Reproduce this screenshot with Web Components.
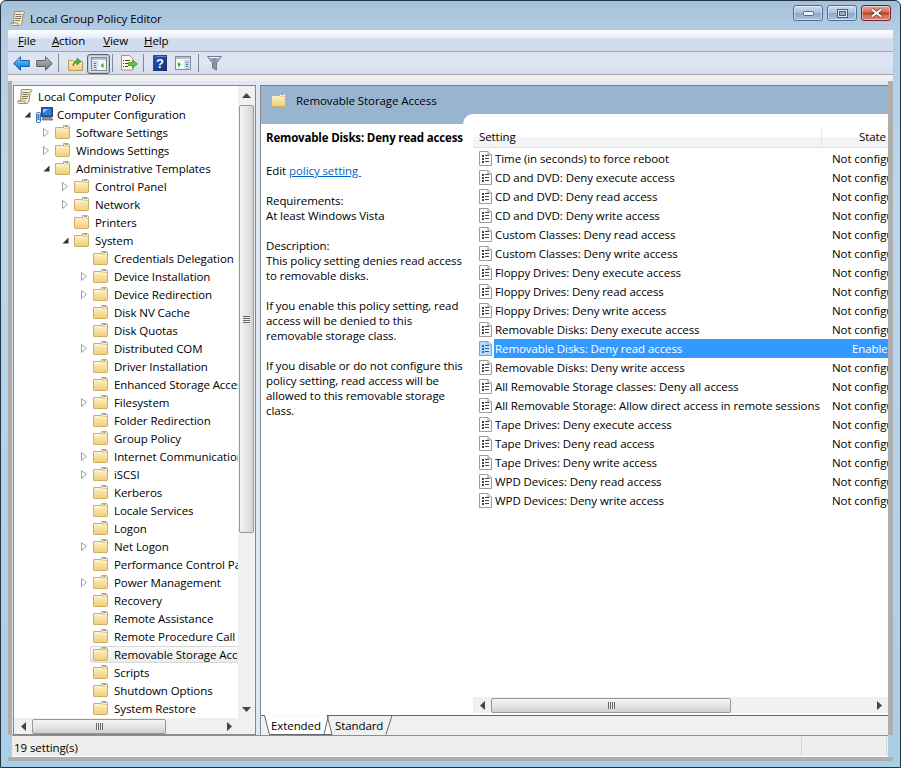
<!DOCTYPE html>
<html lang="en"><head><meta charset="utf-8"><title>Local Group Policy Editor</title>
<style>
html,body{margin:0;padding:0;background:#fff}
body{width:901px;height:770px;overflow:hidden;font:11.5px/15px "Open Sans","Noto Sans",sans-serif;letter-spacing:-.08px;color:#000}
</style></head><body>
<app-window>
  <title-bar slot="title">Local Group Policy Editor</title-bar>
  <menu-bar slot="menu"><span><u>F</u>ile</span><span><u>A</u>ction</span><span><u>V</u>iew</span><span><u>H</u>elp</span></menu-bar>
  <tool-bar slot="tools">
    <ui-icon name="back" style="margin-left:5px"></ui-icon>
    <ui-icon name="forward" style="margin-left:6px"></ui-icon>
    <tool-sep style="margin-left:5px"></tool-sep>
    <ui-icon name="up" style="margin-left:9px"></ui-icon>
    <tool-toggle style="margin-left:4px"><ui-icon name="pane"></ui-icon></tool-toggle>
    <tool-sep style="margin-left:2px"></tool-sep>
    <ui-icon name="export" style="margin-left:8px"></ui-icon>
    <tool-sep style="margin-left:5px"></tool-sep>
    <ui-icon name="help" style="margin-left:9px"></ui-icon>
    <ui-icon name="view" style="margin-left:8px"></ui-icon>
    <tool-sep style="margin-left:7px"></tool-sep>
    <ui-icon name="filter" style="margin-left:8px"></ui-icon>
  </tool-bar>
  <tree-pane slot="tree">
    <tree-row level="0" icon="scroll">Local Computer Policy</tree-row>
    <tree-row level="1" state="open" icon="computer">Computer Configuration</tree-row>
    <tree-row level="2" state="closed">Software Settings</tree-row>
    <tree-row level="2" state="closed">Windows Settings</tree-row>
    <tree-row level="2" state="open">Administrative Templates</tree-row>
    <tree-row level="3" state="closed">Control Panel</tree-row>
    <tree-row level="3" state="closed">Network</tree-row>
    <tree-row level="3">Printers</tree-row>
    <tree-row level="3" state="open">System</tree-row>
    <tree-row level="4">Credentials Delegation</tree-row>
    <tree-row level="4" state="closed">Device Installation</tree-row>
    <tree-row level="4" state="closed">Device Redirection</tree-row>
    <tree-row level="4">Disk NV Cache</tree-row>
    <tree-row level="4">Disk Quotas</tree-row>
    <tree-row level="4" state="closed">Distributed COM</tree-row>
    <tree-row level="4">Driver Installation</tree-row>
    <tree-row level="4">Enhanced Storage Access</tree-row>
    <tree-row level="4" state="closed">Filesystem</tree-row>
    <tree-row level="4">Folder Redirection</tree-row>
    <tree-row level="4">Group Policy</tree-row>
    <tree-row level="4" state="closed">Internet Communication Management</tree-row>
    <tree-row level="4" state="closed">iSCSI</tree-row>
    <tree-row level="4">Kerberos</tree-row>
    <tree-row level="4">Locale Services</tree-row>
    <tree-row level="4">Logon</tree-row>
    <tree-row level="4" state="closed">Net Logon</tree-row>
    <tree-row level="4">Performance Control Panel</tree-row>
    <tree-row level="4" state="closed">Power Management</tree-row>
    <tree-row level="4">Recovery</tree-row>
    <tree-row level="4">Remote Assistance</tree-row>
    <tree-row level="4">Remote Procedure Call</tree-row>
    <tree-row level="4" selected>Removable Storage Access</tree-row>
    <tree-row level="4">Scripts</tree-row>
    <tree-row level="4">Shutdown Options</tree-row>
    <tree-row level="4">System Restore</tree-row>
  </tree-pane>
  <details-pane slot="details">
    <span slot="heading">Removable Storage Access</span>
    <policy-info slot="info"></policy-info>
    <policy-list slot="list">
      <policy-row>Time (in seconds) to force reboot</policy-row>
      <policy-row>CD and DVD: Deny execute access</policy-row>
      <policy-row>CD and DVD: Deny read access</policy-row>
      <policy-row>CD and DVD: Deny write access</policy-row>
      <policy-row>Custom Classes: Deny read access</policy-row>
      <policy-row>Custom Classes: Deny write access</policy-row>
      <policy-row>Floppy Drives: Deny execute access</policy-row>
      <policy-row>Floppy Drives: Deny read access</policy-row>
      <policy-row>Floppy Drives: Deny write access</policy-row>
      <policy-row>Removable Disks: Deny execute access</policy-row>
      <policy-row selected>Removable Disks: Deny read access</policy-row>
      <policy-row>Removable Disks: Deny write access</policy-row>
      <policy-row>All Removable Storage classes: Deny all access</policy-row>
      <policy-row>All Removable Storage: Allow direct access in remote sessions</policy-row>
      <policy-row>Tape Drives: Deny execute access</policy-row>
      <policy-row>Tape Drives: Deny read access</policy-row>
      <policy-row>Tape Drives: Deny write access</policy-row>
      <policy-row>WPD Devices: Deny read access</policy-row>
      <policy-row>WPD Devices: Deny write access</policy-row>
    </policy-list>
    <tab-strip slot="tabs"></tab-strip>
  </details-pane>
  <status-bar slot="status">19 setting(s)</status-bar>
</app-window>

<script>
const folderDefs = `<linearGradient id="fg" x1="0" y1="0" x2="0" y2="1"><stop offset="0" stop-color="#fdf1c4"/><stop offset="1" stop-color="#f1cd78"/></linearGradient>`;
const docLines = (c) => `<g fill="${c}"><rect x="3" y="4" width="2" height="2"/><rect x="6" y="4" width="4" height="1"/><rect x="3" y="7" width="2" height="2"/><rect x="6" y="7" width="4" height="1"/><rect x="3" y="10" width="2" height="2"/><rect x="6" y="10" width="4" height="1"/></g>`;
const ICONS = {
  folder:[15,14,`<defs>${folderDefs}</defs><path d="M8.5 .5h5l1 1v2h-6z" fill="#fbeebb" stroke="#c9a861"/><rect x="10" y="1" width="3" height="1" fill="#6fa6d6"/><path d="M.5 2.5h7l1 1h6v9.5l-.5.5H1l-.5-.5z" fill="url(#fg)" stroke="#cfae66"/><path d="M1.5 4h12" stroke="#fff6d6"/>`],
  scroll:[16,17,`<path d="M4.5 1.5h9c1.2 0 1.8 1 1.2 2l-1.7 .5-1 9c-.2 1.5-1 2.5-2.5 2.5H2.5C1 15.500 .5 14 1 13h2.500z" fill="#f6edc9" stroke="#9d8e62"/><path d="M5.500 4.500h6M5.500 6.500h6M5 8.500h6M5 10.500h5" stroke="#7d7563"/><path d="M1 13h7c.5 0 .5 1.500 0 2.500" fill="none" stroke="#9d8e62"/>`],
  computer:[17,17,`<rect x="5.500" y="1.500" width="11" height="9" fill="#1e58b8" stroke="#374a6a"/><rect x="7" y="3" width="8" height="6" fill="#2f7fe0"/><path d="M7 3h5l-5 4z" fill="#9fd0f6"/><path d="M7 11h8l2 3H6z" fill="#8f9bb0" stroke="#4b5872" stroke-width=".7"/><rect x=".5" y="6.500" width="4" height="10" rx="1" fill="#dfe8f2" stroke="#3d6fa8"/><rect x="1.500" y="8" width="2" height="6" fill="#3a82cc"/>`],
  doc:[13,15,`<path d="M.5 .5h8.500l3.500 3.500v10.500H.5z" fill="#fff" stroke="#9c9c9c"/><path d="M9 .5v3.500h3.500" fill="#e8e8e8" stroke="#9c9c9c"/>${docLines('#444')}`],
  docsel:[13,15,`<path d="M.5 .5h8.500l3.500 3.500v10.500H.5z" fill="#b9dbff" stroke="#6aa6e0"/><path d="M9 .5v3.500h3.500" fill="#d6e9ff" stroke="#6aa6e0"/>${docLines('#2468b0')}`],
  back:[17,15,`<defs><linearGradient id="bk" x1="0" y1="0" x2="0" y2="1"><stop offset="0" stop-color="#8fd5fb"/><stop offset=".55" stop-color="#2c9bea"/><stop offset="1" stop-color="#1569c6"/></linearGradient></defs><path d="M.7 7.500 7.500 .8v3.700h8.800v6H7.500v3.700z" fill="url(#bk)" stroke="#1a5fa8"/>`],
  forward:[17,15,`<defs><linearGradient id="fw" x1="0" y1="0" x2="0" y2="1"><stop offset="0" stop-color="#c4c4c4"/><stop offset="1" stop-color="#6f6f6f"/></linearGradient></defs><path d="M16.300 7.500 9.500 .8v3.700H.7v6h8.800v3.700z" fill="url(#fw)" stroke="#5f5f5f"/>`],
  up:[15,16,`<defs>${folderDefs}</defs><path d="M.5 5.500h5l1 1h8v9h-14z" fill="url(#fg)" stroke="#b99b56"/><path d="M5 11c0-3 1.500-5 4-5.500V3l4 3.500-4 3.500V7.500c-1.500.3-3 1.500-4 3.500z" fill="#4fb43c" stroke="#2f8124" stroke-width=".7"/>`],
  pane:[16,14,`<rect x=".5" y=".5" width="15" height="13" fill="#f4f6f8" stroke="#7d8794"/><rect x="1" y="1" width="14" height="2" fill="#b7c2cf"/><rect x="2" y="4.500" width="4" height="8" fill="#dbe9f5" stroke="#7aa4c8" stroke-width=".5"/><g fill="#2e7fbd"><rect x="3" y="6" width="2" height="1"/><rect x="3" y="8" width="2" height="1"/><rect x="3" y="10" width="2" height="1"/></g><path d="M12.500 6v5l-3-2.500z" fill="#2ca52c"/>`],
  export:[17,16,`<path d="M.5 .5h8l3.500 3.500v11H.5z" fill="#fdf8e6" stroke="#a39a80"/><g fill="#444"><rect x="2" y="5" width="1" height="1"/><rect x="4" y="5" width="5" height="1"/><rect x="2" y="8" width="1" height="1"/><rect x="4" y="8" width="3" height="1"/><rect x="2" y="11" width="1" height="1"/><rect x="4" y="11" width="3" height="1"/></g><path d="M7.500 7.500h4V5l5 4-5 4v-2.500h-4z" fill="#6dc24a" stroke="#3e8f2a" stroke-width=".8"/>`],
  help:[14,16,`<defs><linearGradient id="hp" x1="0" y1="0" x2="1" y2="1"><stop offset="0" stop-color="#2a55b8"/><stop offset="1" stop-color="#132c74"/></linearGradient></defs><rect width="14" height="16" fill="url(#hp)"/><path d="M3 1h10v1H3z" fill="#5d86d8"/><text x="7" y="13" text-anchor="middle" font-family="Liberation Sans" font-size="13" font-weight="700" fill="#fff">?</text>`],
  view:[16,14,`<rect x=".5" y=".5" width="15" height="13" fill="#f6f6f6" stroke="#858b92"/><rect x="1" y="1" width="14" height="2" fill="#b8bfc6"/><path d="M3 6v5l3-2.500z" fill="#2ca52c"/><rect x="10" y="4.500" width="4" height="8" fill="#dbe9f5" stroke="#7aa4c8" stroke-width=".5"/><g fill="#2e7fbd"><rect x="11" y="6" width="2" height="1"/><rect x="11" y="8" width="2" height="1"/><rect x="11" y="10" width="2" height="1"/></g>`],
  filter:[15,16,`<defs><linearGradient id="fl" x1="0" y1="0" x2="1" y2="0"><stop offset="0" stop-color="#c9d3dc"/><stop offset=".5" stop-color="#7e8d9c"/><stop offset="1" stop-color="#c5cfd8"/></linearGradient></defs><path d="M.5 1.500h14L9.500 8v7l-4-2V8z" fill="url(#fl)" stroke="#6d7d8c"/><path d="M2.500 2.500h10" stroke="#f2f6fa"/>`],
  open:[7,7,`<path d="M6.500 .5v6H.5z" fill="#333"/>`],
  closed:[6,9,`<path d="M.5 .5 5.500 4.500 .5 8.500z" fill="#fff" stroke="#a0a0a0"/>`]
};
customElements.define('ui-icon',class extends HTMLElement{
  static get observedAttributes(){return ['name']}
  attributeChangedCallback(){this.render()}
  connectedCallback(){this.render()}
  render(){
    const def=ICONS[this.getAttribute('name')]; if(!def) return;
    const [w,h,body]=def;
    const r=this.shadowRoot||this.attachShadow({mode:'open'});
    r.innerHTML=`<style>:host{display:inline-flex;flex:none;width:${w}px;height:${h}px}svg{display:block}</style><svg width="${w}" height="${h}" viewBox="0 0 ${w} ${h}">${body}</svg>`;
  }
});
const el=(name,html,onConnect)=>customElements.define(name,class extends HTMLElement{
  constructor(){super();this.attachShadow({mode:'open'}).innerHTML=html;}
  connectedCallback(){if(onConnect)onConnect.call(this)}
});
el('app-window',`<style>
:host{display:flex;flex-direction:column;box-sizing:border-box;width:901px;height:768px;border:1px solid #26323e;border-radius:6px 6px 0 0;overflow:hidden;
background:linear-gradient(180deg,#a5c0da 0,#b4cde4 30px,#bcd6ec 200px,#a9cee8 100%);padding:0 7px 6px}
.main{flex:1;min-height:0;display:flex;gap:4px;box-sizing:border-box;background:#dfe7f2;border-left:4px solid #aeaeae;border-right:5px solid #aeaeae;padding-top:4px}
.shell{flex:1;min-height:0;display:flex;flex-direction:column;border-bottom:4px solid #aeaeae}
.gap{height:6px;flex:none;background:#f0f0f0}
</style>
<slot name="title"></slot>
<div class="shell">
<slot name="menu"></slot><slot name="tools"></slot><div class="gap"></div>
<div class="main"><slot name="tree"></slot><slot name="details"></slot></div>
<slot name="status"></slot>
</div>`);
el('title-bar',`<style>
:host{display:flex;align-items:center;flex:none;height:29px;margin-left:2px}
.t{margin-left:4px;flex:1;padding-top:6px}
ui-icon{margin-top:6px}
.btns{display:flex;gap:4px;margin-right:2px;margin-top:-5px}
.b{width:30px;height:16px;box-sizing:border-box;border:1px solid #4f6f92;border-radius:3px;background:linear-gradient(180deg,#cfe0f0 0,#a6c0da 48%,#8aa9c8 52%,#a9c6de 100%);display:flex;align-items:center;justify-content:center;box-shadow:inset 0 0 0 1px rgba(255,255,255,.45)}
.c{background:linear-gradient(180deg,#e8a49a 0,#d06a5e 46%,#b4481f 47%,#b4481f 60%,#cf6a5c 62%,#d9857a 100%);border-color:#7a1e2a}
</style>
<ui-icon name="scroll"></ui-icon><div class="t"><slot></slot></div>
<div class="btns">
<div class="b"><svg width="11" height="5"><rect x=".5" y=".5" width="10" height="4" rx="1" fill="#eef3f8" stroke="#52667c"/></svg></div>
<div class="b"><svg width="11" height="9"><rect x=".5" y=".5" width="10" height="8" fill="#dfe9f3" stroke="#4a5e74"/><rect x="2.500" y="2.500" width="6" height="4" fill="#8fabc8" stroke="#4a5e74"/></svg></div>
<div class="b c"><svg width="13" height="10"><path d="M2 1.500l9 7M11 1.500l-9 7" stroke="#4a3434" stroke-width="3.400"/><path d="M2 1.500l9 7M11 1.500l-9 7" stroke="#fff" stroke-width="2.200"/></svg></div>
</div>`);
el('menu-bar',`<style>
:host{display:flex;flex:none;height:22px;box-sizing:border-box;background:linear-gradient(180deg,#fdfeff 0,#e6ecf6 8px,#d3dcee 9px,#d3dcee 100%);border-bottom:1px solid #a4a6ab;padding-left:10px;align-items:center}
::slotted(span:nth-child(1)){margin-right:16px}
::slotted(span:nth-child(2)){margin-right:18px}
::slotted(span:nth-child(3)){margin-right:16px}
</style><slot></slot>`);
el('tool-bar',`<style>
:host{display:flex;flex:none;height:23px;box-sizing:border-box;background:linear-gradient(180deg,#dbe2f0 0,#e0e6f3 50%,#d5dcee 100%);border-bottom:1px solid #a4a6ab;align-items:center}
</style><slot></slot>`);
el('tool-sep',`<style>:host{display:block;flex:none;width:1px;height:18px;background:#7f8894}</style>`);
el('tool-toggle',`<style>:host{display:flex;flex:none;width:23px;height:20px;margin-top:2px;box-sizing:border-box;align-items:center;justify-content:center;border:1px solid #5b6470;border-radius:3px;background:#d6dce8;box-shadow:inset 0 0 0 1px #c0c6d0}</style><slot></slot>`);
el('tree-row',`<style>
:host{display:flex;height:18px;align-items:center;white-space:nowrap;box-sizing:border-box;padding-left:calc(7px + 19px * (var(--l) - 1))}
.a{width:14px;flex:none;display:flex;justify-content:center;padding-right:2px;box-sizing:border-box;align-items:center;height:18px}
.i{display:flex;align-items:center;margin-right:6px;margin-left:1px}
.s{display:flex;align-items:center;height:18px;flex:none;box-sizing:border-box}
:host([selected]) .s{background:linear-gradient(180deg,#fbfbfb,#ececec);border:1px solid #d9d9d9;border-right:0;border-radius:3px 0 0 3px;height:17px;margin-left:-2px;padding-left:1px;padding-right:60px}
</style><span class="a"></span><span class="s"><span class="i"></span><slot></slot></span>`,function(){
  const l=+this.getAttribute('level');
  this.style.setProperty('--l',l);
  const r=this.shadowRoot, st=this.getAttribute('state');
  if(st) r.querySelector('.a').innerHTML=`<ui-icon name="${st}"></ui-icon>`;
  r.querySelector('.i').innerHTML=`<ui-icon name="${this.getAttribute('icon')||'folder'}"></ui-icon>`;
  if(l===0){this.style.paddingLeft='2px';r.querySelector('.a').style.display='none';r.querySelector('.i').style.marginRight='5px';}
  if(this.getAttribute('icon')==='computer'){r.querySelector('.i').style.marginRight='4px';}
});
el('scroll-v',`<style>
:host{display:flex;flex-direction:column;flex:none;width:17px;background:#f0f0f0;align-items:center}
.a{height:18px;display:flex;align-items:center;justify-content:center;flex:none}
.t{flex:none;width:15px;height:428px;box-sizing:border-box;border:1px solid #989898;border-radius:2px;background:linear-gradient(90deg,#f4f4f4,#e6e6e6 50%,#d2d2d2);display:flex;align-items:center;justify-content:center;margin-top:1px}
.f{flex:1}
.g{width:7px;height:7px;background:repeating-linear-gradient(180deg,#666 0 1px,#eee 1px 2px)}
</style><div class="a"><svg width="9" height="5"><path d="M4.500 0 9 5H0z" fill="#444"/></svg></div><div class="t"><div class="g"></div></div><div class="f"></div><div class="a"><svg width="9" height="5"><path d="M4.500 5 9 0H0z" fill="#444"/></svg></div>`);
el('scroll-h',`<style>
:host{display:flex;flex:none;height:16px;background:#f0f0f0;align-items:center}
.a{width:18px;display:flex;align-items:center;justify-content:center;flex:none}
.t{height:15px;box-sizing:border-box;border:1px solid #989898;border-radius:2px;background:linear-gradient(180deg,#f4f4f4,#e6e6e6 50%,#cfcfcf);display:flex;align-items:center;justify-content:center;flex:none;width:var(--w,134px)}
.f{flex:1}
.g{width:7px;height:7px;background:repeating-linear-gradient(90deg,#666 0 1px,#eee 1px 2px)}
</style><div class="a"><svg width="5" height="9"><path d="M0 4.500 5 0V9z" fill="#444"/></svg></div><div class="t"><div class="g"></div></div><div class="f"></div><div class="a"><svg width="5" height="9"><path d="M5 4.500 0 0V9z" fill="#444"/></svg></div>`);
el('tree-pane',`<style>
:host{display:flex;flex-direction:column;flex:none;width:243px;box-sizing:border-box;border:1px solid #828790;background:#fff;margin-left:1px}
.top{flex:1;min-height:0;display:flex}
.rows{flex:1;min-width:0;overflow:hidden;padding-top:1px}
.bot{display:flex}
scroll-h{flex:1;--w:134px}
.corner{width:17px;background:#f0f0f0}
</style><div class="top"><div class="rows"><slot></slot></div><scroll-v></scroll-v></div><div class="bot"><scroll-h></scroll-h><div class="corner"></div></div>`);
el('details-pane',`<style>
:host{display:flex;flex-direction:column;flex:1;min-width:0;border-left:1px solid #828790;border-top:1px solid #7a7f86;background:#fff}
.head{height:38px;flex:none;box-sizing:border-box;background:#99b4d1;display:flex;align-items:flex-start;padding:7px 0 0 10px}
.n{margin-left:10px;line-height:15px}
.body{flex:1;min-height:0;display:flex}
::slotted(policy-info){flex:none}
::slotted(policy-list){margin-top:-10px}
</style><div class="head"><ui-icon name="folder"></ui-icon><span class="n"><slot name="heading"></slot></span></div>
<div class="body"><slot name="info"></slot><slot name="list"></slot></div><slot name="tabs"></slot>`);
el('policy-info',`<style>
:host{display:block;width:202px;box-sizing:border-box;padding:6px 0 0 5px;line-height:15px;white-space:nowrap}
b{display:block;margin-bottom:18px;letter-spacing:-.17px}
a{color:#0066cc;text-decoration:underline}
</style><b>Removable Disks: Deny read access</b>Edit <a>policy setting&nbsp;</a><br><br>Requirements:<br>At least Windows Vista<br><br>Description:<br>This policy setting denies read access<br>to removable disks.<br><br>If you enable this policy setting, read<br>access will be denied to this<br>removable storage class.<br><br>If you disable or do not configure this<br>policy setting, read access will be<br>allowed to this removable storage<br>class.`);
el('policy-list',`<style>
:host{display:flex;flex-direction:column;flex:1;min-width:0;background:#fff;border-top-left-radius:10px;padding-left:10px;padding-top:15px;overflow:hidden;margin-bottom:2px}
.h{display:flex;height:18px;flex:none;background:linear-gradient(180deg,#fff 0,#fff 45%,#f3f4f5 46%,#f3f4f5);border-bottom:1px solid #e0e0e0;margin-bottom:1px;overflow:hidden}
.s{width:349px;padding-left:6px;box-sizing:border-box;border-right:1px solid #e2e4e7}
.st{padding-left:37px;white-space:nowrap}
.rows{flex:1;min-height:0}
scroll-h{--w:240px}
</style><div class="h"><div class="s">Setting</div><div class="st">State</div></div><div class="rows"><slot></slot></div><scroll-h></scroll-h>`);
el('policy-row',`<style>
:host{display:flex;height:19px;align-items:center;white-space:nowrap;box-sizing:border-box;padding-left:6px}
ui-icon{margin-right:2px}
.m{display:flex;align-items:center;height:19px;flex:1;min-width:0;box-sizing:border-box;padding-left:1px;justify-content:space-between}
.v{width:56px;flex:none;overflow:hidden}
:host([selected]) .m{background:#3399ff;color:#fff;outline:1px dotted #c97b2a;outline-offset:-1px}
:host([selected]) .v{width:36px}
</style><ui-icon name="doc"></ui-icon><div class="m"><slot></slot><span class="v">Not configured</span></div>`,function(){
  if(this.hasAttribute('selected')){
    this.shadowRoot.querySelector('.v').textContent='Enabled';
    this.shadowRoot.querySelector('ui-icon').setAttribute('name','docsel');
  }
});
el('tab-strip',`<style>
:host{display:grid;flex:none;height:20px;background:#f0f0f0}
svg,.l{grid-area:1/1}
.l{display:flex;padding:3px 0 0 10px;line-height:15px;gap:14px}
</style><svg width="627" height="20"><path d="M0 .5h3.500L8.500 19.500H71L66 .5z" fill="#fff"/>
<path d="M0 .5h3.500L8.500 19.500H71L66 .5h61.500M130.500 .5H627" fill="none" stroke="#666"/>
<path d="M63 19.500 67.500 .5H131L125 19.500" fill="none" stroke="#666"/>
</svg><div class="l"><span>Extended</span><span>Standard</span></div>`);
el('status-bar',`<style>
:host{display:flex;flex:none;height:22px;box-sizing:border-box;background:#f0eeec;border-top:1px solid #8d8d8d;border-bottom:1px solid #fff;align-items:center;margin:0 0 0 4px;width:876px;padding:2px 0 0 2px}
.a{flex:1}.b{width:84px;height:19px;margin-top:-2px;border-left:1px solid #d5d3d0;border-right:1px solid #d5d3d0;margin-right:1px}
</style><div class="a"><slot></slot></div><div class="b"></div>`);
</script>
</body></html>
